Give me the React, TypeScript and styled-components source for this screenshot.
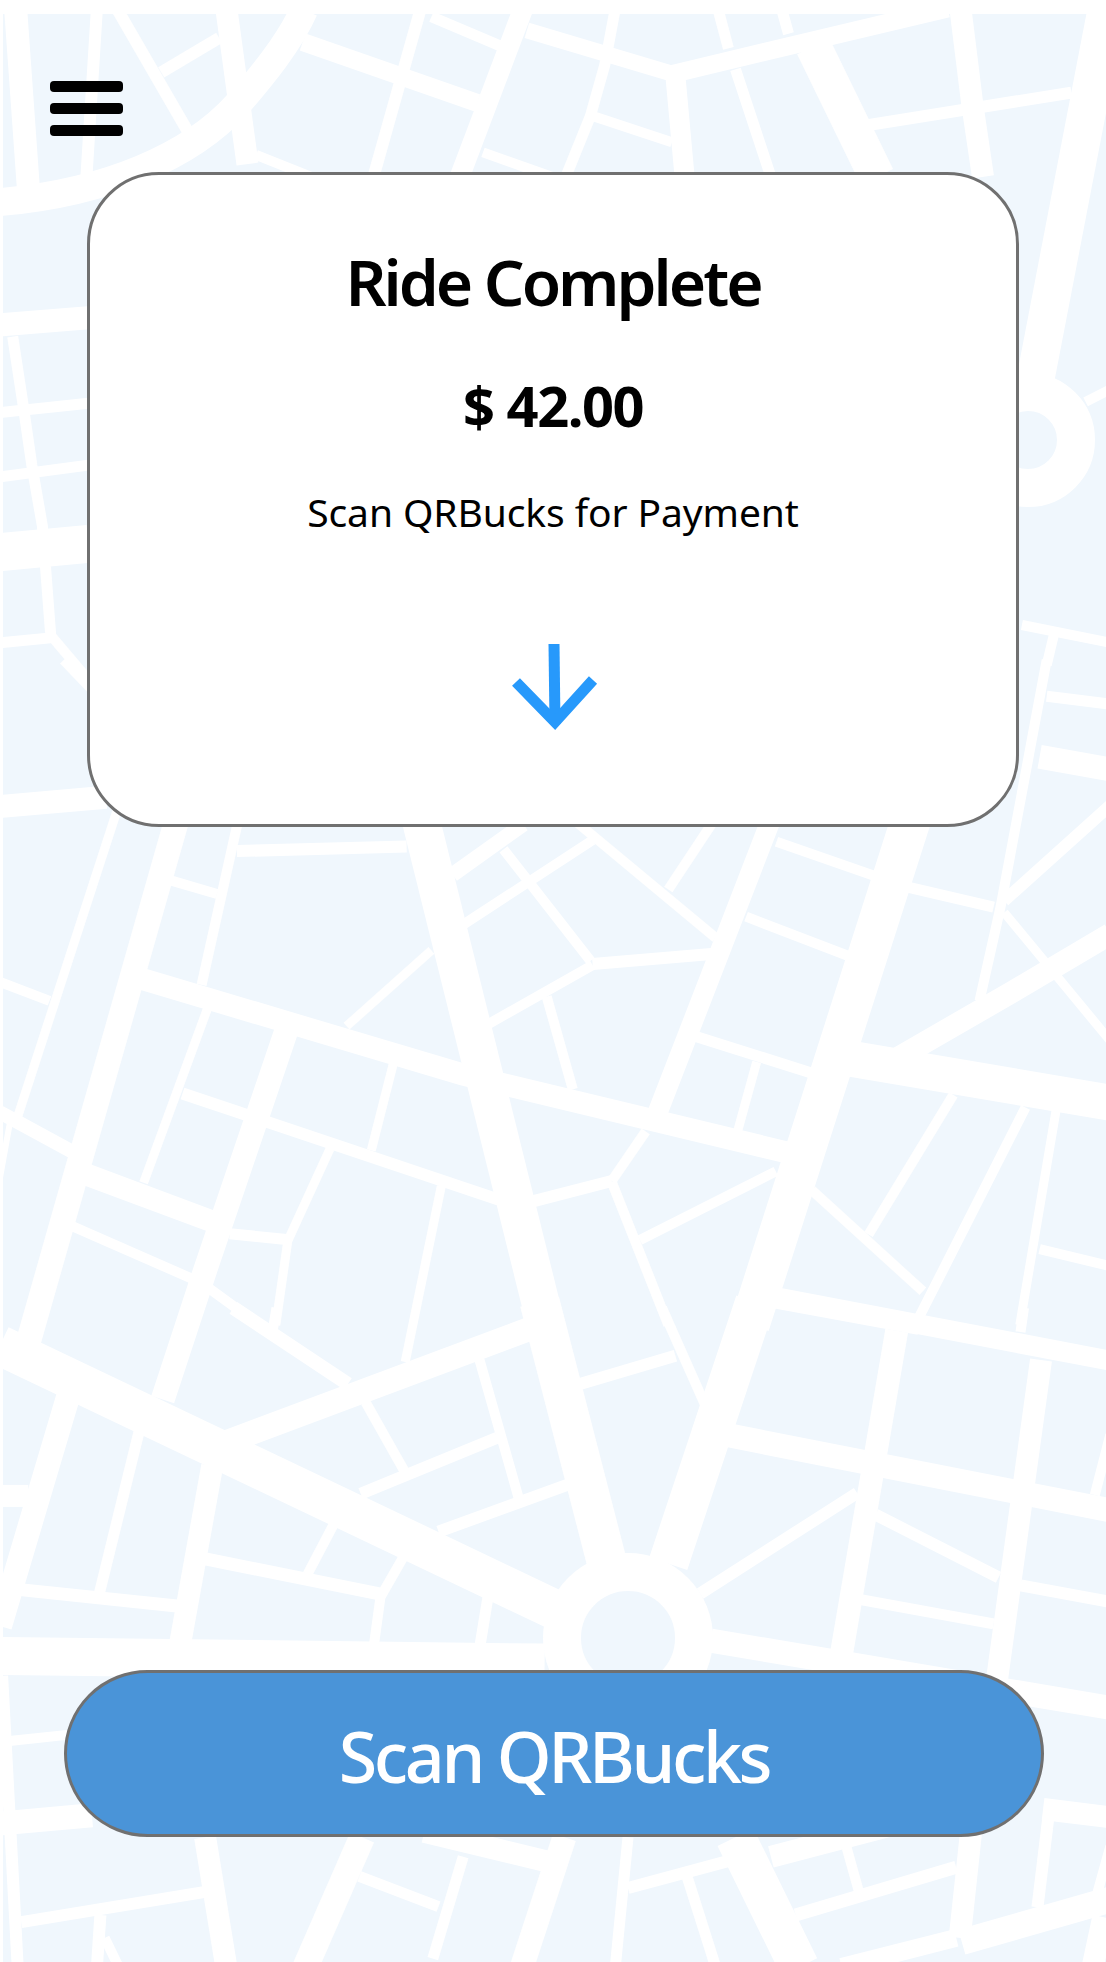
import React from 'react';
import styled, { createGlobalStyle } from 'styled-components';

const GlobalStyle = createGlobalStyle`
  html, body {
    margin: 0;
    padding: 0;
    background: #fff;
  }
`;

const fontStack = `"Noto Sans", "Open Sans", "Liberation Sans", sans-serif`;

const Page = styled.div`
  position: relative;
  width: 1106px;
  height: 1962px;
  overflow: hidden;
  display: flex;
  flex-direction: column;
  align-items: flex-start;
  font-family: ${fontStack};
`;

const MapCanvas = styled.svg`
  position: absolute;
  left: 3px;
  top: 14px;
  width: 1103px;
  height: 1948px;
`;

const MenuButton = styled.button`
  position: relative;
  display: flex;
  flex-direction: column;
  gap: 11px;
  width: 73px;
  margin: 81px 0 0 50px;
  padding: 0;
  border: 0;
  background: none;
`;

const MenuBar = styled.span`
  display: block;
  height: 11px;
  border-radius: 4px;
  background: #000;
`;

const Card = styled.section`
  position: relative;
  box-sizing: border-box;
  display: flex;
  flex-direction: column;
  align-items: center;
  width: 932px;
  height: 655px;
  margin: 36px 0 0 87px;
  padding-top: 65px;
  border: 3px solid #707070;
  border-radius: 72px;
  background: #fff;
`;

const Title = styled.h1`
  margin: 0;
  font-size: 64px;
  line-height: 84px;
  font-weight: 600;
  letter-spacing: -3px;
  color: #000;
`;

const Amount = styled.div`
  margin-top: 45px;
  font-size: 56px;
  line-height: 72px;
  font-weight: 700;
  letter-spacing: -1.5px;
  color: #000;
`;

const Hint = styled.p`
  margin: 45px 0 0;
  font-size: 39px;
  line-height: 52px;
  letter-spacing: -0.1px;
  color: #000;
`;

const DownArrow = styled.svg`
  width: 90px;
  height: 90px;
  margin: 106px 0 0 5px;
`;

const ScanButton = styled.button`
  position: relative;
  box-sizing: border-box;
  width: 980px;
  height: 167px;
  margin: 843px 0 0 64px;
  padding: 4px 0 0;
  border: 3px solid #707070;
  border-radius: 84px;
  background: #4a94d8;
  font-family: inherit;
  font-size: 70px;
  font-weight: 500;
  letter-spacing: -3.4px;
  color: #fff;
`;

type Road = [number, ...[number, number][]];

interface Sheet {
  top: number;
  scaleY: number;
  roads: Road[];
}

// traced in sheet units, x is always 1.414 per page pixel
const sheets: Sheet[] = [
  {
    top: 0,
    scaleY: 2.376,
    roads: [
      [23, [22, 20], [40, 445]],
      [12, [137, 20], [122, 425]],
      [12, [165, 20], [270, 325]],
      [12, [228, 172], [310, 90]],
      [22, [320, 20], [350, 390]],
      [18, [428, 100], [675, 245]],
      [12, [595, 20], [528, 420]],
      [11, [610, 40], [706, 108]],
      [20, [740, 20], [650, 420]],
      [16, [745, 72], [950, 175]],
      [18, [945, 178], [1340, 20]],
      [11, [870, 20], [855, 155], [835, 275], [800, 420]],
      [20, [955, 180], [968, 420]],
      [10, [840, 277], [950, 338]],
      [10, [683, 362], [780, 420]],
      [10, [362, 368], [440, 420]],
      [11, [1015, 20], [1030, 115]],
      [11, [1105, 20], [1115, 80]],
      [11, [1040, 165], [1090, 420]],
      [36, [1150, 110], [1240, 420]],
      [12, [1225, 298], [1515, 220]],
      [22, [1358, 20], [1375, 250], [1390, 420]],
      [38, [1565, 20], [1462, 920]],
      [10, [1535, 955], [1570, 925]],
      [23, [0, 772], [125, 755]],
      [11, [0, 980], [125, 958]],
      [11, [0, 1133], [125, 1105]],
      [38, [0, 1312], [125, 1292]],
      [11, [0, 1527], [75, 1515]],
      [10, [72, 1510], [125, 1615]],
      [11, [18, 800], [33, 965], [45, 1105], [60, 1250], [72, 1515]],
      [10, [1445, 1485], [1570, 1527]],
      [10, [1490, 1510], [1480, 1580]],
    ],
  },
  {
    top: 660,
    scaleY: 2.376,
    roads: [
      [38, [595, 380], [772, 1580]],
      [40, [1288, 380], [1060, 1580]],
      [25, [250, 380], [35, 1650]],
      [20, [1090, 380], [930, 1075]],
      [22, [195, 755], [655, 985], [1130, 1177]],
      [36, [1195, 945], [1570, 1052]],
      [22, [1270, 945], [1430, 790], [1570, 651]],
      [14, [0, 1075], [115, 1180]],
      [22, [115, 1218], [310, 1340]],
      [9, [165, 360], [25, 1085]],
      [10, [0, 765], [70, 810]],
      [6, [15, 1090], [0, 1230]],
      [23, [0, 348], [150, 326]],
      [10, [240, 523], [307, 556]],
      [10, [337, 380], [285, 772]],
      [12, [335, 454], [575, 443]],
      [15, [640, 510], [740, 390]],
      [10, [652, 632], [838, 428]],
      [10, [712, 450], [835, 715]],
      [10, [815, 385], [1012, 660]],
      [10, [1010, 380], [945, 545]],
      [12, [838, 722], [1010, 698]],
      [10, [838, 725], [680, 875]],
      [10, [773, 800], [810, 1020]],
      [9, [610, 690], [490, 870]],
      [11, [985, 895], [1145, 980]],
      [9, [1070, 955], [1043, 1120]],
      [10, [1055, 610], [1198, 702]],
      [10, [1098, 432], [1235, 512]],
      [11, [1285, 540], [1405, 587]],
      [10, [1480, 0], [1415, 585], [1385, 810]],
      [12, [1420, 572], [1570, 345]],
      [9, [1420, 600], [1570, 905]],
      [11, [1480, 86], [1570, 105]],
      [24, [1470, 230], [1570, 260]],
      [10, [1348, 1033], [1228, 1365]],
      [10, [1148, 1260], [1305, 1500]],
      [10, [1450, 1063], [1300, 1560]],
      [9, [1493, 1072], [1442, 1580]],
      [10, [1470, 1400], [1570, 1440]],
      [20, [1090, 1515], [1300, 1580]],
      [10, [913, 1120], [865, 1238]],
      [12, [865, 1238], [745, 1290]],
      [10, [865, 1240], [945, 1580]],
      [10, [1097, 1215], [905, 1378]],
      [12, [258, 1030], [705, 1282]],
      [9, [556, 960], [525, 1165]],
      [9, [624, 1250], [573, 1668]],
      [24, [404, 885], [290, 1450], [230, 1757]],
      [9, [293, 830], [203, 1242]],
      [9, [467, 1160], [407, 1380], [390, 1580]],
      [10, [102, 1345], [285, 1480], [375, 1590]],
      [11, [325, 1363], [405, 1377]],
      [10, [90, 0], [130, 70]],
    ],
  },
  {
    top: 1310,
    scaleY: 2.405,
    roads: [
      [40, [0, 85], [790, 725]],
      [40, [763, -20], [857, 600]],
      [40, [1068, -20], [945, 610]],
      [24, [320, 318], [770, 32]],
      [14, [330, -5], [492, 178]],
      [10, [391, -5], [386, 45]],
      [24, [96, 210], [0, 760]],
      [11, [197, 290], [140, 685]],
      [22, [300, 375], [255, 800]],
      [13, [25, 672], [250, 712]],
      [13, [280, 595], [540, 684]],
      [10, [472, 515], [435, 635]],
      [10, [570, 595], [538, 690], [528, 815]],
      [11, [690, 690], [677, 825]],
      [38, [0, 832], [770, 848]],
      [10, [517, 222], [572, 388]],
      [12, [703, 307], [510, 442]],
      [10, [678, 120], [733, 450]],
      [12, [803, 420], [620, 533]],
      [12, [820, 178], [955, 110]],
      [10, [936, -5], [1000, 240]],
      [24, [1032, 302], [1570, 482]],
      [20, [1100, -30], [1570, 122]],
      [23, [1268, 50], [1190, 825]],
      [22, [1472, 120], [1410, 885]],
      [12, [1238, 492], [1412, 643]],
      [11, [1215, 696], [1405, 755]],
      [12, [1443, 662], [1570, 702]],
      [24, [1005, 795], [1570, 957]],
      [12, [990, 682], [1212, 440]],
      [10, [1548, 445], [1570, 300]],
      [22, [290, 1268], [320, 1580]],
      [26, [512, 1268], [432, 1580]],
      [24, [0, 1235], [130, 1215]],
      [10, [10, 1037], [95, 1022]],
      [12, [3, 880], [25, 1580]],
      [12, [30, 1472], [288, 1400]],
      [12, [142, 1455], [137, 1580]],
      [10, [148, 1510], [168, 1580]],
      [22, [600, 1255], [795, 1335]],
      [11, [655, 1315], [612, 1560]],
      [11, [508, 1362], [620, 1435]],
      [24, [798, 1268], [738, 1580]],
      [11, [888, 1268], [870, 1580]],
      [12, [888, 1390], [1028, 1326]],
      [40, [1040, 1268], [1130, 1580]],
      [11, [972, 1365], [1012, 1580]],
      [22, [1090, 1315], [1360, 1195]],
      [13, [1125, 1455], [1352, 1340]],
      [10, [1197, 1292], [1214, 1396]],
      [22, [1375, 1225], [1357, 1510]],
      [12, [1482, 1225], [1467, 1436]],
      [26, [1360, 1520], [1570, 1418]],
      [18, [1190, 1580], [1352, 1510]],
      [10, [1552, 1400], [1570, 1290]],
      [22, [1475, 1200], [1570, 1220]],
      [22, [1560, 1460], [1545, 1580]],
      [10, [1443, 53], [1448, -5]],
      [22, [0, 447], [40, 447]],
    ],
  },
];

const roadPoints = (points: [number, number][], sheet: Sheet) =>
  points.map(([x, y]) => `${(x / 1.414).toFixed(1)},${(sheet.top + y / sheet.scaleY).toFixed(1)}`).join(' ');

const CityMap = () => (
  <MapCanvas viewBox="3 14 1103 1948">
    <rect x="3" y="14" width="1103" height="1948" fill="#f0f7fd" />
    <g fill="none" stroke="#fff">
      <path d="M 0 202 C 106 193 191 156 237 105 C 262 76 290 42 304 10" strokeWidth="28" />
      {sheets.map(sheet =>
        sheet.roads.map(([width, ...points], i) => (
          <polyline key={`${sheet.top}-${i}`} points={roadPoints(points, sheet)} strokeWidth={width} />
        )),
      )}
      <circle cx="1028" cy="440" r="48" strokeWidth="38" />
      <circle cx="628" cy="1638" r="66" strokeWidth="38" />
    </g>
  </MapCanvas>
);

const App = () => {
  return (
    <Page>
      <GlobalStyle />
      <CityMap />
      <MenuButton>
        <MenuBar />
        <MenuBar />
        <MenuBar />
      </MenuButton>
      <Card>
        <Title>Ride Complete</Title>
        <Amount>$ 42.00</Amount>
        <Hint>Scan QRBucks for Payment</Hint>
        <DownArrow viewBox="0 0 90 90">
          <path d="M43 0 L44 80" stroke="#2799fb" strokeWidth="11" fill="none" />
          <path d="M5 38 L44 78 L82 36" stroke="#2799fb" strokeWidth="11" fill="none" />
        </DownArrow>
      </Card>
      <ScanButton>Scan QRBucks</ScanButton>
    </Page>
  );
};

export default App;
